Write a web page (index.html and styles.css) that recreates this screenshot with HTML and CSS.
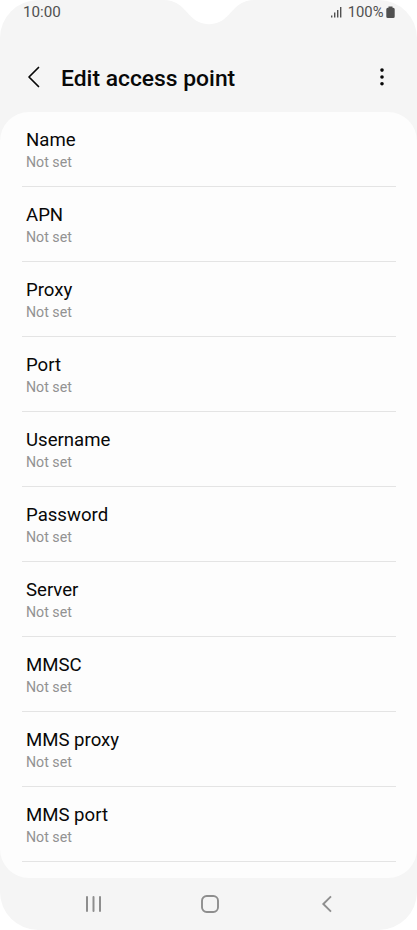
FILE: index.html
```html
<!DOCTYPE html>
<html lang="en">
<head>
<meta charset="utf-8">
<title>Edit access point</title>
<link rel="stylesheet" href="styles.css">
</head>
<body>
<div class="phone">
  <svg class="notch" width="92" height="25" viewBox="0 0 92 25"><path d="M0 0C14 0 20 8 26 14.500C32 21 38 24.200 46 24.200C54 24.200 60 21 66 14.500C72 8 78 0 92 0Z" fill="#fff"/></svg>
  <div class="status">
    <span class="time">10:00</span>
    <svg class="signal" width="12" height="13" viewBox="0 0 12 13" fill="#505050"><rect x="0" y="9.500" width="1.400" height="2"/><rect x="3" y="6.500" width="1.400" height="5"/><rect x="6" y="4" width="1.400" height="7.500"/><rect x="9" y="1" width="1.400" height="10.500"/></svg>
    <span class="percent">100%</span>
    <svg class="battery" width="9" height="13" viewBox="0 0 9 13"><path d="M2.500 0.600H6.500V1.800H7.200Q8.700 1.800 8.700 3.300V10.600Q8.700 12.100 7.200 12.100H1.800Q.3 12.100 .3 10.600V3.300Q.3 1.800 1.800 1.800H2.500Z" fill="#505050"/></svg>
  </div>
  <header class="header">
    <svg class="back" width="14" height="22" viewBox="0 0 14 22"><path d="M11.500 1.500L2 11L11.500 20.500" fill="none" stroke="#080808" stroke-width="1.700" stroke-linecap="round" stroke-linejoin="round"/></svg>
    <h1>Edit access point</h1>
    <svg class="more" width="6" height="20" viewBox="0 0 6 20"><circle cx="3" cy="3.100" r="1.800"/><circle cx="3" cy="10" r="1.800"/><circle cx="3" cy="16.800" r="1.800"/></svg>
  </header>
  <main class="card">
    <div class="row"><div class="label">Name</div><div class="value">Not set</div></div>
    <div class="row"><div class="label">APN</div><div class="value">Not set</div></div>
    <div class="row"><div class="label">Proxy</div><div class="value">Not set</div></div>
    <div class="row"><div class="label">Port</div><div class="value">Not set</div></div>
    <div class="row"><div class="label">Username</div><div class="value">Not set</div></div>
    <div class="row"><div class="label">Password</div><div class="value">Not set</div></div>
    <div class="row"><div class="label">Server</div><div class="value">Not set</div></div>
    <div class="row"><div class="label">MMSC</div><div class="value">Not set</div></div>
    <div class="row"><div class="label">MMS proxy</div><div class="value">Not set</div></div>
    <div class="row"><div class="label">MMS port</div><div class="value">Not set</div></div>
  </main>
  <nav class="nav">
    <svg width="18" height="18" viewBox="0 0 18 18" fill="none" stroke="#8e8e8e" stroke-width="2" stroke-linecap="round"><path d="M2 2V16M8.500 2V16M15 2V16"/></svg>
    <svg width="18" height="18" viewBox="0 0 18 18" fill="none" stroke="#8e8e8e" stroke-width="1.900"><rect x="1" y="1" width="16" height="16" rx="4.700"/></svg>
    <svg width="18" height="18" viewBox="0 0 18 18" fill="none" stroke="#8e8e8e" stroke-width="1.900"><path d="M15 1.300L7.300 9L15 16.700"/></svg>
  </nav>
</div>
</body>
</html>
```

FILE: styles.css
```css
* { box-sizing: border-box; }
body { margin: 0; background: #fff; font-family: Roboto, "Liberation Sans", sans-serif; }
.phone {
  position: relative;
  width: 417px;
  height: 930px;
  background: #f5f5f5;
  border-radius: 38px;
  overflow: hidden;
  display: flex;
  flex-direction: column;
}
.notch { position: absolute; left: 163px; top: 0; }
.status {
  height: 25px;
  padding: 0 22px 0 23px;
  display: flex;
  align-items: center;
  font-size: 15.2px;
  line-height: 25px;
  color: #505050;
}
.time { margin-right: auto; }
.signal { margin-right: 5px; }
.percent { margin-right: 2.5px; font-size: 14.8px; }
.header {
  height: 87px;
  padding: 17px 32px 0 27px;
  display: flex;
  align-items: center;
}
h1 {
  margin: 3px auto 0 20px;
  font-size: 22.85px;
  line-height: 28px;
  font-weight: 500;
  color: #080808;
}
.more { fill: #080808; }
.card {
  height: 766px;
  padding: 0 21px 0 22px;
  background: #fdfdfd;
  border-radius: 29px;
}
.row {
  height: 74.95px;
  padding: 16px 4px 0;
  border-bottom: 1px solid #e4e4e4;
}
.row:first-child { height: 75.3px; }
.label { font-size: 18.6px; line-height: 24px; color: #080808; }
.value { font-size: 14.2px; line-height: 20px; color: #929292; }
.nav {
  height: 52px;
  padding: 0 83px 0 85px;
  display: flex;
  align-items: center;
  justify-content: space-between;
}
```
